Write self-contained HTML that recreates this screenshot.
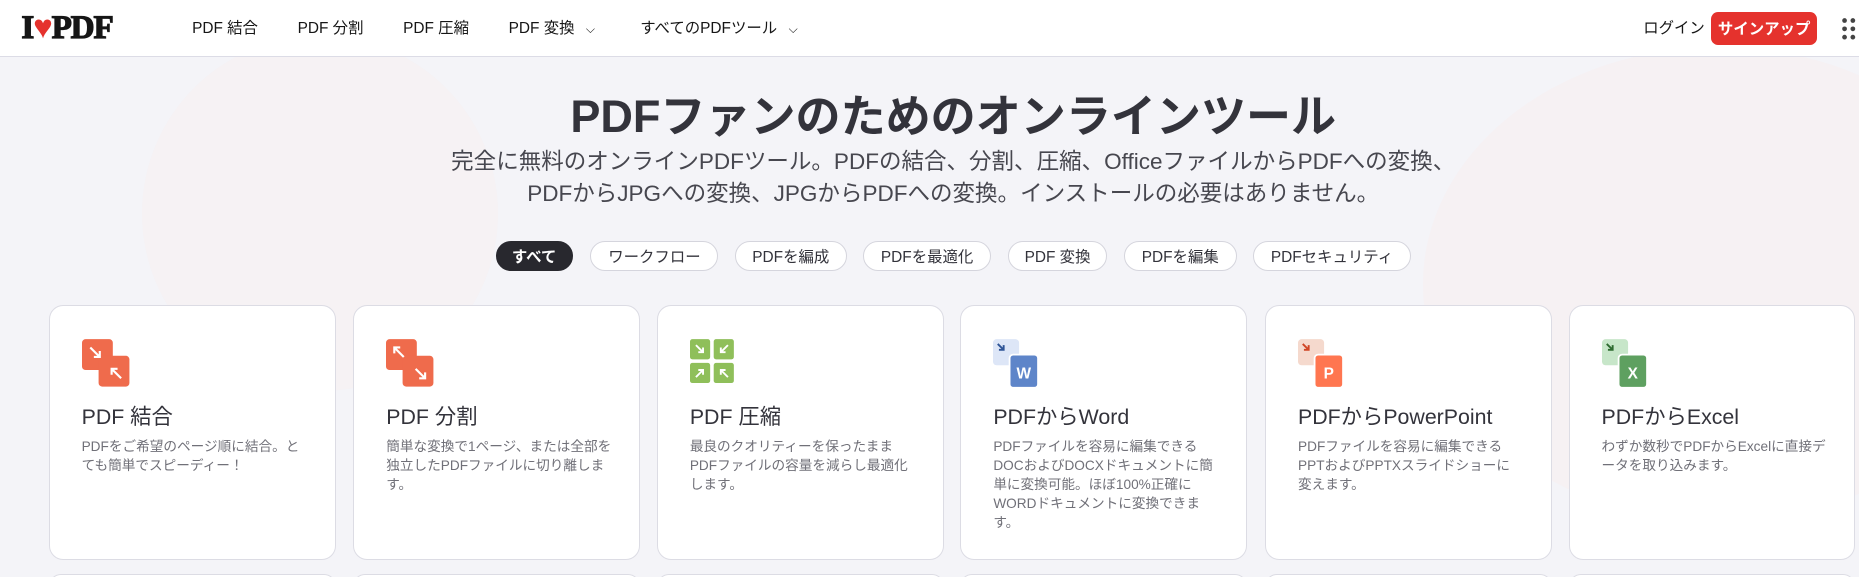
<!DOCTYPE html>
<html><head><meta charset="utf-8">
<style>
*{margin:0;padding:0;box-sizing:border-box}
html,body{width:1859px;height:577px;overflow:hidden;background:#f5f5fa}
#w{zoom:1.18559;width:1568px;height:487px;position:relative;font-family:"Liberation Sans","Noto Sans CJK JP",sans-serif;color:#33333b;background:#f4f4f8;overflow:hidden}
.nav{position:absolute;left:0;top:0;width:1568px;height:48px;background:#fff;border-bottom:1px solid #dcdce6}
.nav .it{position:absolute;top:16px;font-size:13px;line-height:17px;color:#161616}
.logo{position:absolute;left:18px;top:7px;font:900 28px/34px "Liberation Serif",serif;color:#161616;letter-spacing:-1px;-webkit-text-stroke:1px #161616}
.btn{position:absolute;left:1443px;top:10px;width:90px;height:28px;background:#e5322d;border-radius:6px;color:#fff;font-size:13px;font-weight:bold;display:flex;align-items:center;justify-content:center}
h1{position:absolute;left:0;width:1608px;top:76px;text-align:center;font-size:38px;line-height:46px;font-weight:bold;color:#33333b}
.sub{position:absolute;left:0;width:1608px;top:123px;text-align:center;font-size:19px;line-height:27px;color:#47474f}
.pill{position:absolute;top:203px;height:26px;border:1px solid #d5d5dd;border-radius:13px;background:#fff;font-size:13px;display:flex;align-items:center;justify-content:center;color:#33333b}
.card{position:absolute;top:257px;width:242px;height:215px;background:#fff;border:1px solid #dcdce4;border-radius:12px}
.card h3{position:absolute;left:27px;top:82px;font-size:18px;line-height:24px;font-weight:normal;color:#33333b}
.card p{position:absolute;left:27px;top:112px;width:190px;font-size:11.5px;line-height:16px;color:#707078}
.ic{position:absolute;left:27px;top:27px;width:44px;height:44px}
.card2{position:absolute;top:484px;width:242px;height:20px;background:#fff;border:1px solid #dcdce4;border-radius:12px}
</style></head><body><div id="w">
<div style="position:absolute;left:1200px;top:40px;width:500px;height:400px;border-radius:50%;background:#f7eef0;opacity:.6"></div>
<div style="position:absolute;left:120px;top:30px;width:300px;height:300px;border-radius:50%;background:#f7f0f0;opacity:.5"></div>
<div class="nav">
<div class="logo">I<span style="color:#e5322d;-webkit-text-stroke:0;font-size:28px">♥</span>PDF</div>
<div class="it" style="left:162px">PDF 結合</div>
<div class="it" style="left:251px">PDF 分割</div>
<div class="it" style="left:340px">PDF 圧縮</div>
<div class="it" style="left:429px">PDF 変換 <span style="font-size:10px;margin-left:6px">⌵</span></div>
<div class="it" style="left:540px">すべてのPDFツール <span style="font-size:10px;margin-left:6px">⌵</span></div>
<div class="it" style="left:1386px">ログイン</div>
<div class="btn">サインアップ</div>
<svg style="position:absolute;left:1553px;top:14px" width="16" height="22"><g fill="#444"><circle cx="3" cy="3" r="2"/><circle cx="10" cy="3" r="2"/><circle cx="3" cy="10" r="2"/><circle cx="10" cy="10" r="2"/><circle cx="3" cy="17" r="2"/><circle cx="10" cy="17" r="2"/></g></svg>
</div>
<h1>PDFファンのためのオンラインツール</h1>
<div class="sub">完全に無料のオンラインPDFツール。PDFの結合、分割、圧縮、OfficeファイルからPDFへの変換、<br>PDFからJPGへの変換、JPGからPDFへの変換。インストールの必要はありません。</div>
<div class="pill" style="left:418px;width:65px;background:#28282e;border-color:#28282e;color:#fff;font-weight:bold">すべて</div>
<div class="pill" style="left:498px;width:108px">ワークフロー</div>
<div class="pill" style="left:620px;width:94px">PDFを編成</div>
<div class="pill" style="left:728px;width:108px">PDFを最適化</div>
<div class="pill" style="left:850px;width:84px">PDF 変換</div>
<div class="pill" style="left:948px;width:95px">PDFを編集</div>
<div class="pill" style="left:1057px;width:133px">PDFセキュリティ</div>

<div class="card" style="left:41px"><svg class="ic" viewBox="0 0 44 44"><rect x="0" y="1" width="26" height="26" rx="3" fill="#ef6b4c"/><rect x="14" y="15" width="26" height="26" rx="3" fill="#ef6b4c"/><path d="M7 8l8 8M15 11v5h-5M33 34l-8-8M25 31v-5h5" stroke="#fff" stroke-width="1.8" fill="none"/></svg><h3>PDF 結合</h3><p>PDFをご希望のページ順に結合。とても簡単でスピーディー！</p></div>
<div class="card" style="left:298px"><svg class="ic" viewBox="0 0 44 44"><rect x="0" y="1" width="26" height="26" rx="3" fill="#ef6b4c"/><rect x="14" y="15" width="26" height="26" rx="3" fill="#ef6b4c"/><path d="M15 16l-8-8M7 13v-5h5M25 26l8 8M33 29v5h-5" stroke="#fff" stroke-width="1.8" fill="none"/></svg><h3>PDF 分割</h3><p>簡単な変換で1ページ、または全部を独立したPDFファイルに切り離します。</p></div>
<div class="card" style="left:554px"><svg class="ic" viewBox="0 0 44 44"><g fill="#8fbf5a"><rect x="0" y="1" width="17" height="17" rx="2"/><rect x="20" y="1" width="17" height="17" rx="2"/><rect x="0" y="21" width="17" height="17" rx="2"/><rect x="20" y="21" width="17" height="17" rx="2"/></g><path d="M5 6l6 6M11 8v4h-4M32 6l-6 6M26 8v4h4M11 27l-6 6M7 27h4v4M26 27l6 6M30 27h-4v4" stroke="#fff" stroke-width="1.6" fill="none"/></svg><h3>PDF 圧縮</h3><p>最良のクオリティーを保ったままPDFファイルの容量を減らし最適化します。</p></div>
<div class="card" style="left:810px"><svg class="ic" viewBox="0 0 44 44"><rect x="0" y="1" width="22" height="22" rx="3" fill="#dde6f7"/><rect x="14" y="14" width="24" height="28" rx="3" fill="#5e85c9" stroke="#fff" stroke-width="1.5"/><path d="M4 5l5 5M9 6v4h-4" stroke="#2f5597" stroke-width="1.6" fill="none"/><text x="26" y="34" font-size="13" font-weight="bold" fill="#fff" text-anchor="middle" font-family="Liberation Sans">W</text></svg><h3>PDFからWord</h3><p>PDFファイルを容易に編集できるDOCおよびDOCXドキュメントに簡単に変換可能。ほぼ100%正確にWORDドキュメントに変換できます。</p></div>
<div class="card" style="left:1067px"><svg class="ic" viewBox="0 0 44 44"><rect x="0" y="1" width="22" height="22" rx="3" fill="#f5d9cd"/><rect x="14" y="14" width="24" height="28" rx="3" fill="#ff7650" stroke="#fff" stroke-width="1.5"/><path d="M4 5l5 5M9 6v4h-4" stroke="#d04525" stroke-width="1.6" fill="none"/><text x="26" y="34" font-size="13" font-weight="bold" fill="#fff" text-anchor="middle" font-family="Liberation Sans">P</text></svg><h3>PDFからPowerPoint</h3><p>PDFファイルを容易に編集できるPPTおよびPPTXスライドショーに変えます。</p></div>
<div class="card" style="left:1323px"><svg class="ic" viewBox="0 0 44 44"><rect x="0" y="1" width="22" height="22" rx="3" fill="#c7e6c9"/><rect x="14" y="14" width="24" height="28" rx="3" fill="#5ea060" stroke="#fff" stroke-width="1.5"/><path d="M4 5l5 5M9 6v4h-4" stroke="#2e6b30" stroke-width="1.6" fill="none"/><text x="26" y="34" font-size="13" font-weight="bold" fill="#fff" text-anchor="middle" font-family="Liberation Sans">X</text></svg><h3>PDFからExcel</h3><p>わずか数秒でPDFからExcelに直接データを取り込みます。</p></div>
<div class="card2" style="left:41px"></div><div class="card2" style="left:298px"></div><div class="card2" style="left:554px"></div><div class="card2" style="left:810px"></div><div class="card2" style="left:1067px"></div><div class="card2" style="left:1323px"></div>
</div></body></html>
